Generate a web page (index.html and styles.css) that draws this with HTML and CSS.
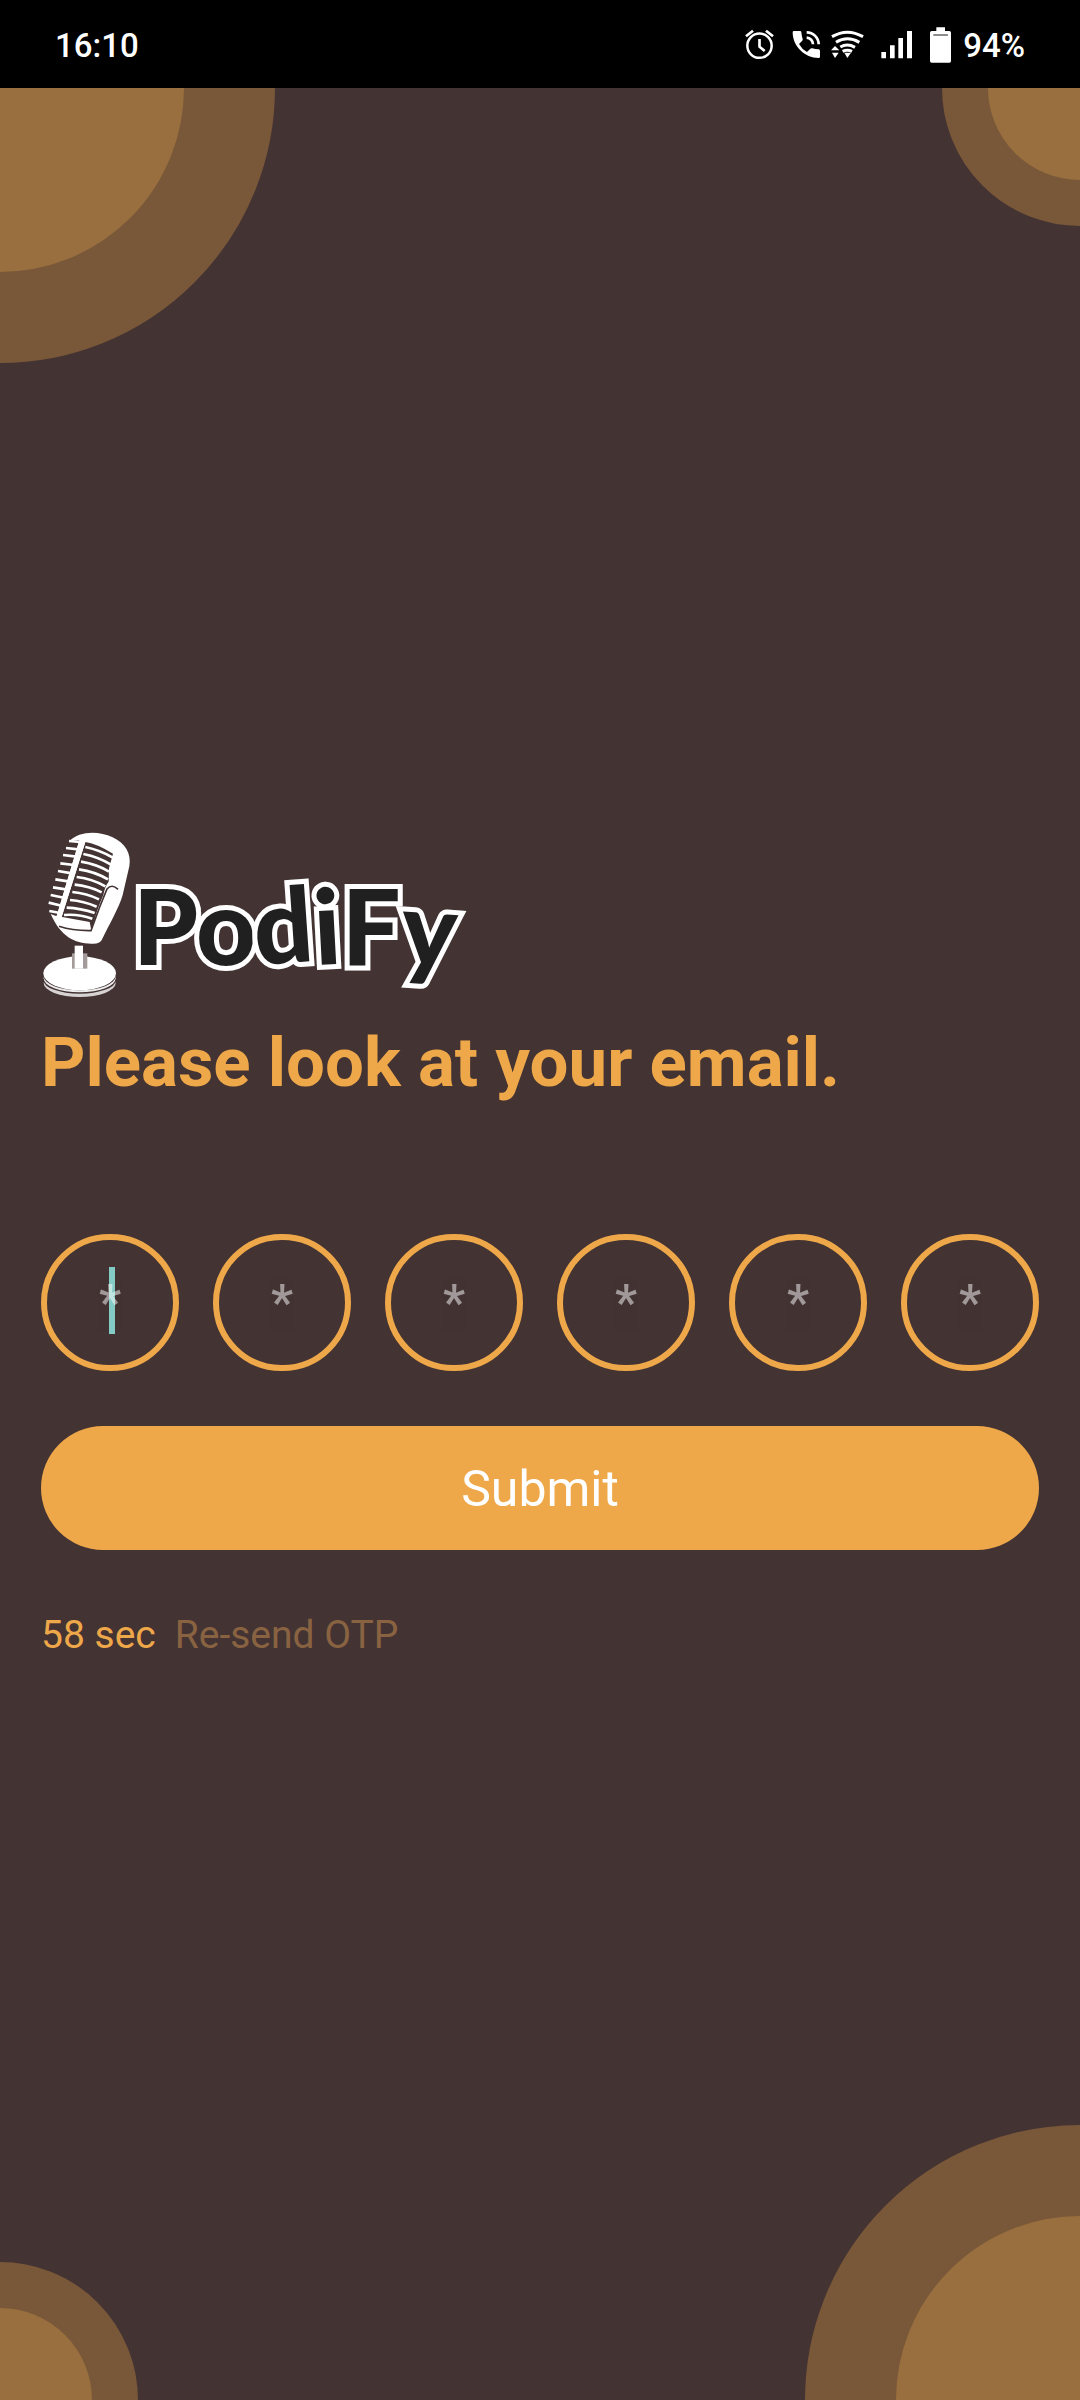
FILE: index.html
```html
<!DOCTYPE html>
<html lang="en">
<head>
<meta charset="utf-8">
<meta name="viewport" content="width=device-width, initial-scale=1">
<title>PodiFy</title>
<link rel="stylesheet" href="styles.css">
</head>
<body>
<header class="status">
  <time class="status-time">16:10</time>
  <div class="status-icons">
    <svg width="37" height="36" viewBox="78 78 111 108" aria-hidden="true">
      <g fill="none" stroke="#fff">
        <circle cx="121.500" cy="134" r="36.500" stroke-width="7.500"/>
        <path d="M121.500 114V137L137 150" stroke-width="8"/>
        <path d="M81 106L102 89M162 106L141 89" stroke-width="8"/>
      </g>
    </svg>
    <svg width="29" height="36" viewBox="219 78 87 108" aria-hidden="true">
      <path fill="#fff" d="M225 90H243Q247 90 247 94Q248 105 251 114Q252 117 249 120L240 129Q248 144 264 153L274 143Q276 141 280 142Q289 145 299 145Q303 146 303 150V167Q303 171 299 171C257 171 221 136 221 94Q221 90 225 90Z"/>
      <g fill="none" stroke="#fff" stroke-width="8"><path d="M263 94A36 36 0 0 1 299 130M263 110A20 20 0 0 1 282 130"/></g>
    </svg>
    <svg width="40" height="36" viewBox="336 78 120 108" aria-hidden="true">
      <g fill="none" stroke="#fff" stroke-width="9">
        <path d="M339 107Q385 80 432 107"/><path d="M351 124Q385 103 421 124"/><path d="M364 138Q385 126 408 139"/><path d="M371 151Q385 144 399 151"/>
      </g>
      <path fill="#fff" d="M336 148L348 135L361 148ZM339 155H359L348 171ZM376 155H396L385 171Z"/>
    </svg>
    <svg width="39" height="36" viewBox="486 78 117 108" aria-hidden="true">
      <path fill="#fff" d="M487 153H501V172H487ZM513 133H527V172H513ZM538 111H552V172H538ZM564 90H579V172H564Z"/>
    </svg>
    <svg width="23" height="36" viewBox="633 78 69 108" aria-hidden="true">
      <path fill="#fff" d="M652 79H678V90H691Q696 90 696 95V180Q696 185 691 185H638Q633 185 633 180V95Q633 90 638 90H652Z"/>
      <path d="M643 102H687" stroke="#555" stroke-width="4"/>
    </svg>
    <span>94%</span>
  </div>
</header>
<main class="screen">
  <span class="ring ring-large ring-top-left"></span>
  <span class="ring ring-small ring-top-right"></span>
  <span class="ring ring-small ring-bottom-left"></span>
  <span class="ring ring-large ring-bottom-right"></span>

  <form class="otp">
    <svg class="logo" viewBox="0 0 424 172" role="img" aria-label="PodiFy">
      <g transform="translate(-11 -10) scale(.33333)">
        <ellipse cx="149" cy="489" rx="108" ry="42" fill="#d8d3d3"/>
        <ellipse cx="149" cy="482" rx="108" ry="39" fill="#433333"/>
        <ellipse cx="149" cy="475" rx="108" ry="42" fill="#eee"/>
        <ellipse cx="149" cy="468" rx="108" ry="43" fill="#433333"/>
        <ellipse cx="149" cy="460" rx="109" ry="51" fill="#fff"/>
        <path d="M126 400H172V446H126Z" fill="#a39b9b"/>
        <path d="M134 377H159V446H134Z" fill="#fff"/>
        <path fill="#fff" d="M119 63C145 35 202 30 248 52C286 69 305 103 298 139L278 225C267 263 238 313 217 356Q211 373 184 371C132 370 93 350 62 282L76 287L179 306L184 331C193 304 199 273 220 225C224 206 228 194 236 185L237 145L249 101Q198 70 166 66L94 294L80 288L148 61Z"/>
        <path fill="none" stroke="#fff" stroke-width="8" d="M117 63L150 66M108 84L145 88M99 105L139 110M91 130L132 135M84 153L126 160M76 178L119 185M69 202L112 209M62 225L105 234M56 248L98 258M58 273L91 279"/>
        <path fill="none" stroke="#fff" stroke-width="8" d="M166 81Q211 91 247 112M160 102Q206 111 243 134M153 125Q201 133 237 155M147 148Q195 155 234 178M140 171Q188 177 226 199M134 194Q177 198 215 217M127 216Q170 220 207 238M120 240Q161 243 200 260M110 263Q153 265 194 279M102 285Q144 281 187 296"/>
        <path d="M148 61L166 66L94 294L80 288Z" fill="#fff"/>
        <path d="M95 301Q132 317 174 319" fill="none" stroke="#fff" stroke-width="16"/>
        <path d="M87 319Q130 333 183 332L209 261L231 207Q246 190 264 208" fill="none" stroke="#433333" stroke-width="5"/>
      </g>
      <text class="logo-name" x="92" y="135" rotate="0 0 -4 -3 0 4">PodiFy</text>
    </svg>
    <h1 class="title">Please look at your email.</h1>
    <div class="digits">
      <div class="digit digit-active"><input type="text" inputmode="numeric" maxlength="1" placeholder="*" aria-label="Digit 1"></div>
      <div class="digit"><input type="text" inputmode="numeric" maxlength="1" placeholder="*" aria-label="Digit 2"></div>
      <div class="digit"><input type="text" inputmode="numeric" maxlength="1" placeholder="*" aria-label="Digit 3"></div>
      <div class="digit"><input type="text" inputmode="numeric" maxlength="1" placeholder="*" aria-label="Digit 4"></div>
      <div class="digit"><input type="text" inputmode="numeric" maxlength="1" placeholder="*" aria-label="Digit 5"></div>
      <div class="digit"><input type="text" inputmode="numeric" maxlength="1" placeholder="*" aria-label="Digit 6"></div>
    </div>
    <button class="submit" type="submit">Submit</button>
    <div class="resend">
      <span>58 sec</span>
      <button class="resend-button" type="button" disabled>Re-send OTP</button>
    </div>
  </form>
</main>
</body>
</html>
```
FILE: styles.css
```css
* {
  box-sizing: border-box;
}

body {
  margin: 0;
  min-height: 100vh;
  display: flex;
  flex-direction: column;
  background: #433333;
  color: #eea84a;
  font-family: Roboto, sans-serif;
}

.status {
  display: flex;
  justify-content: space-between;
  align-items: center;
  height: 88px;
  padding: 2px 55px 0;
  background: #000;
  color: #fff;
  font-size: 33px;
  font-weight: 500;
}

.status-icons {
  display: flex;
  align-items: center;
  gap: 10px;
}

.screen {
  position: relative;
  flex: 1;
  display: flex;
  flex-direction: column;
  justify-content: center;
  padding: 0 41px;
  overflow: hidden;
}

/* Quarter rings in the corners of the screen */
.ring {
  position: absolute;
  border-radius: 50%;
  border: solid #795739;
  background: #9a6f3f;
}

.ring-large {
  width: 550px;
  height: 550px;
  border-width: 91px;
}

.ring-small {
  width: 276px;
  height: 276px;
  border-width: 46px;
}

.ring-top-left {
  top: -275px;
  left: -275px;
}

.ring-top-right {
  top: -138px;
  right: -138px;
}

.ring-bottom-left {
  bottom: -138px;
  left: -138px;
}

.ring-bottom-right {
  right: -275px;
  bottom: -275px;
}

.otp {
  position: relative;
  display: flex;
  flex-direction: column;
}

.logo {
  width: 424px;
  height: 172px;
  overflow: visible;
}

.logo-name {
  font-family: Lato, sans-serif;
  font-size: 104px;
  font-weight: 900;
  fill: #202020;
  stroke: #fff;
  stroke-width: 10px;
  paint-order: stroke;
}

.title {
  margin: 20px 0 130px;
  font-size: 69px;
  line-height: 82px;
  font-weight: 700;
}

.digits {
  display: grid;
  grid-template-columns: repeat(6, 1fr);
  gap: 34px;
}

.digit {
  position: relative;
}

.digit input {
  position: relative;
  display: block;
  width: 100%;
  height: 137px;
  padding: 0;
  border: 6px solid #eea84a;
  border-radius: 69px;
  background: transparent;
  color: #fff;
  font: 500 50px Roboto, sans-serif;
  text-align: center;
  outline: none;
}

.digit input::placeholder {
  color: #fff;
  opacity: 0.5;
}

/* Caret of the field being typed in */
.digit-active::before {
  content: "";
  position: absolute;
  top: 33px;
  left: calc(50% - 1px);
  width: 6px;
  height: 67px;
  background: #84cbc5;
}

.submit {
  margin: 55px 0 62px;
  height: 124px;
  padding: 2px 0 0;
  border: 0;
  border-radius: 62px;
  background: #eea84a;
  color: #fff;
  font: 400 50px Roboto, sans-serif;
}

.resend {
  display: flex;
  gap: 19px;
  font-size: 39px;
  line-height: 46px;
}

.resend-button {
  padding: 0;
  border: 0;
  background: none;
  color: #896341;
  font: inherit;
}
```
